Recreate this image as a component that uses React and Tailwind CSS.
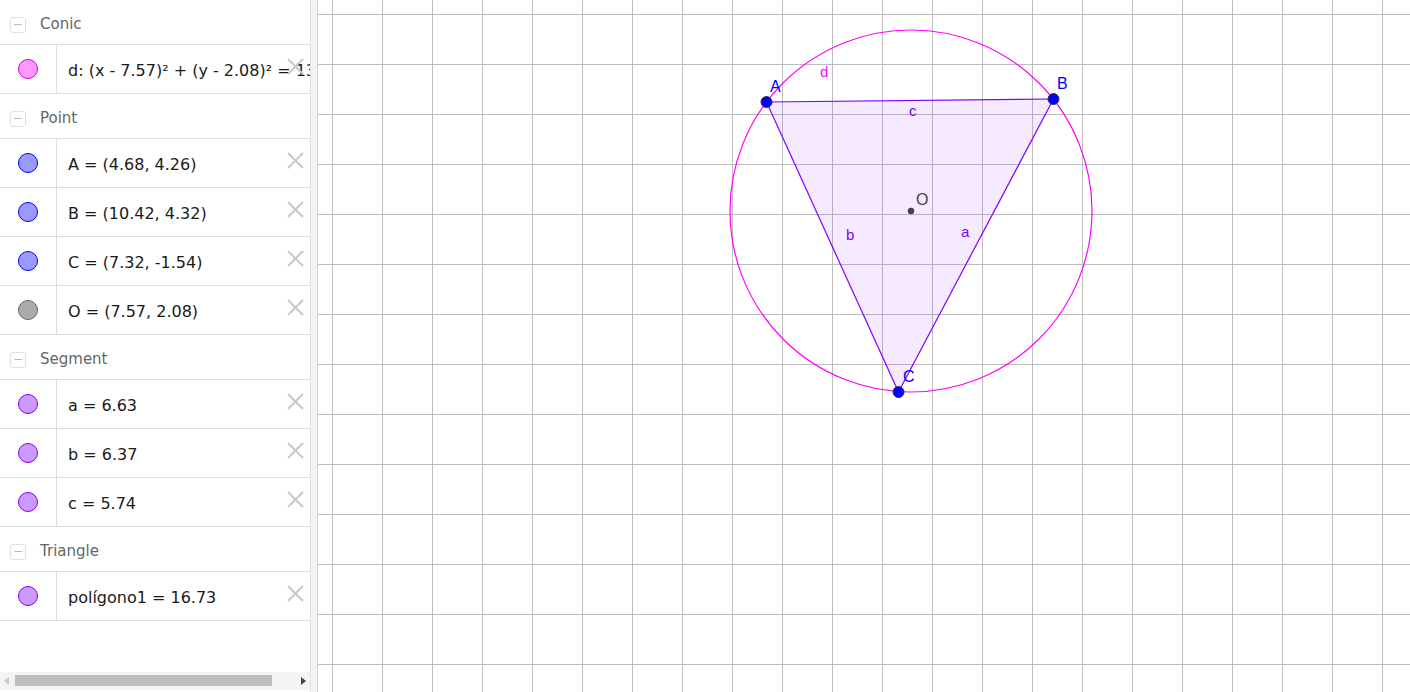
import React from "react";

const groups = [
  {
    title: "Conic",
    items: [
      { text: "d: (x - 7.57)² + (y - 2.08)² = 13.1", fill: "#ff99ff", stroke: "#cc00cc" },
    ],
  },
  {
    title: "Point",
    items: [
      { text: "A = (4.68, 4.26)", fill: "#9999ff", stroke: "#0000ff" },
      { text: "B = (10.42, 4.32)", fill: "#9999ff", stroke: "#0000ff" },
      { text: "C = (7.32, -1.54)", fill: "#9999ff", stroke: "#0000ff" },
      { text: "O = (7.57, 2.08)", fill: "#aaaaaa", stroke: "#666666" },
    ],
  },
  {
    title: "Segment",
    items: [
      { text: "a = 6.63", fill: "#cc99ff", stroke: "#7f00ff" },
      { text: "b = 6.37", fill: "#cc99ff", stroke: "#7f00ff" },
      { text: "c = 5.74", fill: "#cc99ff", stroke: "#7f00ff" },
    ],
  },
  {
    title: "Triangle",
    items: [{ text: "polígono1 = 16.73", fill: "#cc99ff", stroke: "#7f00ff" }],
  },
];

const GroupHeader = ({ title }) => (
  <div className="h-[45px] flex items-center pt-[5px] border-b border-[#dcdcdc]">
    <div className="ml-[10px] w-[16px] h-[16px] rounded-[3px] border border-[#e0e0e0] flex items-center justify-center">
      <div className="w-[8px] h-[1.5px] bg-[#bbbbbb]" />
    </div>
    <span className="ml-[14px] text-[15px] text-[#666666]">{title}</span>
  </div>
);

const ItemRow = ({ item }) => (
  <div className="relative h-[49px] flex border-b border-[#dcdcdc]">
    <div className="w-[57px] shrink-0 border-r border-[#dcdcdc] flex items-center justify-center">
      <div
        className="w-[20px] h-[20px] rounded-full border"
        style={{ background: item.fill, borderColor: item.stroke }}
      />
    </div>
    <div className="flex-1 overflow-hidden whitespace-nowrap pl-[11px] flex items-center pt-[3px] text-[16px] text-[#1a1a1a]">
      {item.text}
    </div>
    <div className="absolute right-[5px] top-[12px] w-[19px] h-[19px]">
      <svg width="19" height="19" viewBox="0 0 19 19">
        <path d="M2 2 L17 17 M17 2 L2 17" stroke="#c8c8c8" strokeWidth="2" />
      </svg>
    </div>
  </div>
);

const Canvas = () => {
  const ox = 532.5;
  const oy = 315;
  const u = 50;
  const P = (x, y) => [ox + x * u, oy - y * u];
  const A = P(4.68, 4.26);
  const B = P(10.42, 4.32);
  const C = P(7.32, -1.54);
  const O = P(7.57, 2.08);
  const vLines = [];
  for (let x = 332.5 - 318; x < 1100; x += 50) vLines.push(x);
  const hLines = [];
  for (let y = 14.5; y < 700; y += 50) hLines.push(y);
  const sx = (p) => p[0] - 318;
  return (
    <div className="relative flex-1 h-full bg-white overflow-hidden">
      <svg width="1092" height="692" className="block">
        {vLines.map((x) => (
          <line key={"v" + x} x1={x} y1="0" x2={x} y2="692" stroke="#bdbdbd" strokeWidth="1" />
        ))}
        {hLines.map((y) => (
          <line key={"h" + y} x1="0" y1={y} x2="1092" y2={y} stroke="#bdbdbd" strokeWidth="1" />
        ))}
        <polygon
          points={`${sx(A)},${A[1]} ${sx(B)},${B[1]} ${sx(C)},${C[1]}`}
          fill="rgba(153, 51, 255, 0.1)"
          stroke="none"
        />
        <circle cx={sx(O)} cy={O[1]} r="181" fill="none" stroke="#ff00ff" strokeWidth="1.2" />
        <line x1={sx(A)} y1={A[1]} x2={sx(B)} y2={B[1]} stroke="#7f00ff" strokeWidth="1.2" />
        <line x1={sx(B)} y1={B[1]} x2={sx(C)} y2={C[1]} stroke="#7f00ff" strokeWidth="1.2" />
        <line x1={sx(C)} y1={C[1]} x2={sx(A)} y2={A[1]} stroke="#7f00ff" strokeWidth="1.2" />
        {[A, B, C].map((p, i) => (
          <circle key={i} cx={sx(p)} cy={p[1]} r="5.5" fill="#0000ff" stroke="#333333" strokeWidth="1" />
        ))}
        <circle cx={sx(O)} cy={O[1]} r="3" fill="#444444" stroke="#222222" strokeWidth="0.5" />
        <g fontFamily="'Liberation Sans', Arial, sans-serif" fontSize="16">
          <text x={770 - 318} y="92" fill="#0000ff">A</text>
          <text x={1057 - 318} y="89" fill="#0000ff">B</text>
          <text x={903 - 318} y="382" fill="#0000ff">C</text>
          <text x={916 - 318} y="205" fill="#444444">O</text>
          <text x={820 - 318} y="77" fill="#ff00ff" fontSize="15">d</text>
          <text x={909 - 318} y="116" fill="#7f00ff" fontSize="15">c</text>
          <text x={846 - 318} y="240" fill="#7f00ff" fontSize="15">b</text>
          <text x={961 - 318} y="237" fill="#7f00ff" fontSize="15">a</text>
        </g>
      </svg>
    </div>
  );
};

export default function App() {
  return (
    <div
      className="w-[1410px] h-[692px] flex overflow-hidden bg-white"
      style={{ fontFamily: "'DejaVu Sans', 'Noto Sans', sans-serif" }}
    >
      <div className="w-[310px] h-full shrink-0 flex flex-col">
        <div className="flex-1 overflow-hidden">
          {groups.map((g) => (
            <div key={g.title}>
              <GroupHeader title={g.title} />
              {g.items.map((it) => (
                <ItemRow key={it.text} item={it} />
              ))}
            </div>
          ))}
        </div>
        <div className="h-[18px] bg-[#f4f4f4] flex items-center relative mb-[2px]">
          <div className="absolute left-[4px] top-[5px] w-0 h-0 border-y-[4px] border-y-transparent border-r-[5px] border-r-[#c8c8c8]" />
          <div className="absolute left-[15px] top-[3px] w-[257px] h-[11px] bg-[#bdbdbd]" />
          <div className="absolute right-[4px] top-[5px] w-0 h-0 border-y-[4px] border-y-transparent border-l-[5px] border-l-[#444444]" />
        </div>
      </div>
      <div className="w-[8px] h-full shrink-0 bg-[#f3f3f3] border-l border-[#e2e2e2] border-r border-r-[#cfcfcf]" />
      <Canvas />
    </div>
  );
}
